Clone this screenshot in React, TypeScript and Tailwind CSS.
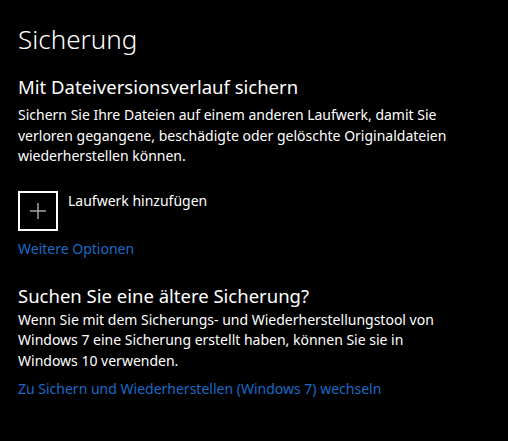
export default function App() {
  return (
    <div
      className="h-[441px] w-[508px] overflow-hidden bg-black px-[18px] pt-[22px] text-white"
      style={{ fontFamily: '"Noto Sans", "Open Sans", sans-serif' }}
    >
      <h1 className="text-[26px] font-light leading-[34px]">Sicherung</h1>

      <section className="mt-[19px]">
        <h2 className="text-[18.5px] leading-[24px]">Mit Dateiversionsverlauf sichern</h2>
        <p className="mt-[6px] text-[14px] leading-[20.5px]">
          Sichern Sie Ihre Dateien auf einem anderen Laufwerk, damit Sie
          <br />
          verloren gegangene, beschädigte oder gelöschte Originaldateien
          <br />
          wiederherstellen können.
        </p>

        <button type="button" className="mt-[24px] flex items-start gap-[10px] text-left">
          <span className="flex h-10 w-10 items-center justify-center border-2 border-white">
            <svg width="16" height="16" viewBox="0 0 16 16" className="text-[#a6a6a6]">
              <path d="M8 0v16M0 8h16" stroke="currentColor" strokeWidth="1.5" />
            </svg>
          </span>
          <span className="text-[14px] leading-[20px]">Laufwerk hinzufügen</span>
        </button>

        <a className="mt-[8px] block text-[14px] leading-[20px] text-[#1a6ac8]">
          Weitere Optionen
        </a>
      </section>

      <section className="mt-[25px]">
        <h2 className="text-[18.5px] leading-[24px]">Suchen Sie eine ältere Sicherung?</h2>
        <p className="mt-[2px] text-[14px] leading-[20.5px]">
          Wenn Sie mit dem Sicherungs- und Wiederherstellungstool von
          <br />
          Windows 7 eine Sicherung erstellt haben, können Sie sie in
          <br />
          Windows 10 verwenden.
        </p>
        <a className="mt-[8px] block text-[14px] leading-[20px] text-[#1a6ac8]">
          Zu Sichern und Wiederherstellen (Windows 7) wechseln
        </a>
      </section>
    </div>
  );
}
